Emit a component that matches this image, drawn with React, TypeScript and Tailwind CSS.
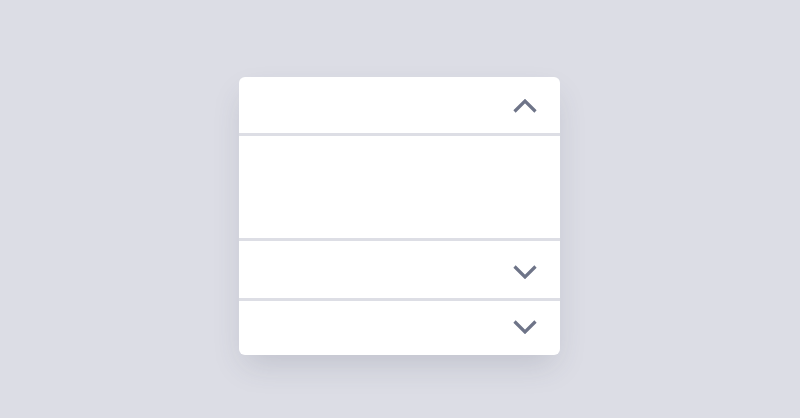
import React from 'react';

function Chevron({ up }: { up?: boolean }) {
  return (
    <svg width="24" height="14" viewBox="0 0 24 14" fill="none">
      <polyline
        points={up ? '1.5,12.5 12,2 22.5,12.5' : '1.5,1.5 12,12 22.5,1.5'}
        stroke="#6e7488"
        strokeWidth="3.2"
        strokeLinecap="butt"
        strokeLinejoin="miter"
      />
    </svg>
  );
}

export default function App() {
  return (
    <div className="flex h-[418px] w-[800px] items-start justify-center bg-[#dcdde5] pt-[77px] font-['Inter',sans-serif]">
      <div className="ml-[-2px] flex w-[321px] flex-col overflow-hidden rounded-md bg-white shadow-[0_14px_30px_-6px_rgba(60,64,90,0.18)]">
        <div className="flex h-[59px] items-center justify-end border-b-[3px] border-[#dddee5] pl-6 pr-[23px] pt-0.5">
          <Chevron up />
        </div>
        <div className="h-[105px] border-b-[3px] border-[#dddee5]" />
        <div className="flex h-[60px] items-center justify-end border-b-[3px] border-[#dddee5] pl-6 pr-[23px] pt-1">
          <Chevron />
        </div>
        <div className="flex h-[54px] items-center justify-end pl-6 pr-[23px] pb-0.5">
          <Chevron />
        </div>
      </div>
    </div>
  );
}
